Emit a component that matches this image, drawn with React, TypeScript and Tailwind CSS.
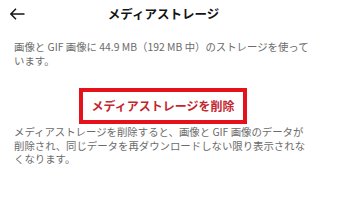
import React from "react";

const font = { fontFamily: '"Noto Sans CJK JP", "Noto Sans", sans-serif' };

export default function App() {
  return (
    <div className="w-[340px] h-[207px] bg-white overflow-hidden" style={font}>
      {/* Header */}
      <header className="h-[28px] flex items-center pl-[10px]">
        <svg width="15" height="12" viewBox="0 0 15 12" className="text-[#141414]">
          <path d="M0.8 6H14.5M6 0.8L0.8 6L6 11.2" fill="none" stroke="currentColor" strokeWidth="1.5" />
        </svg>
        <h1 className="flex-1 text-center pr-[38px] text-[12.5px] font-bold text-[#141414] leading-none">
          メディアストレージ
        </h1>
      </header>

      <p className="mt-[12px] pl-[14px] pr-[30px] text-[10.4px] leading-[13.5px] text-[#6b6b6b]">
        画像と GIF 画像に 44.9 MB（192 MB 中）のストレージを使っています。
      </p>

      {/* Delete button, highlighted */}
      <div className="mt-[21px] flex">
        <button className="ml-[79px] w-[168px] h-[36px] border-[4px] border-[#e5121c] flex items-center justify-center text-[12px] font-bold text-[#c42630]">
          メディアストレージを削除
        </button>
      </div>

      <p className="mt-[1px] pl-[14px] pr-[30px] text-[10.4px] leading-[13.5px] text-[#6b6b6b]">
        メディアストレージを削除すると、画像と GIF 画像のデータが削除され、同じデータを再ダウンロードしない限り表示されなくなります。
      </p>
    </div>
  );
}
